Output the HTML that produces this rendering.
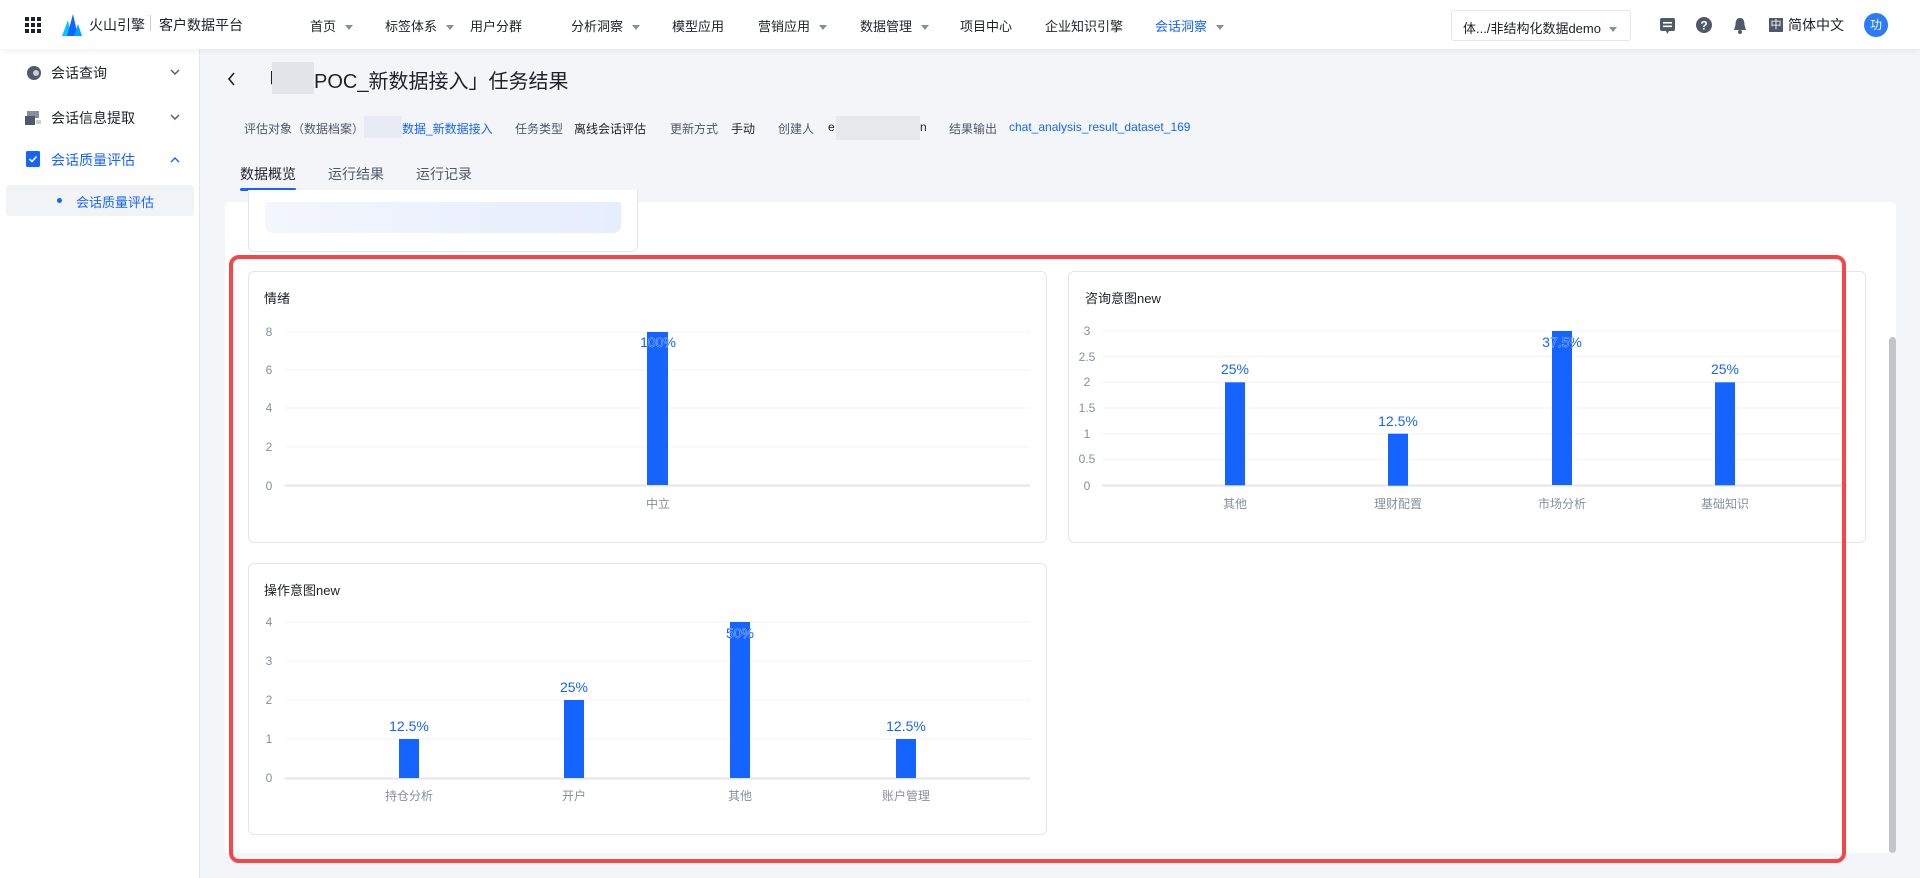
<!DOCTYPE html>
<html><head><meta charset="utf-8"><style>
*{margin:0;padding:0;box-sizing:border-box}
body{width:1920px;height:878px;overflow:hidden;background:#f3f5f9;font-family:"Liberation Sans","Noto Sans CJK SC",sans-serif;color:#1d2129;position:relative}
.a{position:absolute;white-space:nowrap}
.hdr{position:absolute;left:0;top:0;width:1920px;height:49px;background:#fff;box-shadow:0 2px 6px rgba(0,0,0,.06);z-index:2}
.nav{font-size:13px;color:#1d2129;top:16px}
.tri{display:inline-block;width:0;height:0;border-left:4px solid transparent;border-right:4px solid transparent;border-top:5px solid #86909c;margin-left:9px;vertical-align:middle}
.side{position:absolute;left:0;top:49px;width:200px;height:829px;background:#fff;border-right:1px solid #e5e6eb}
.si{font-size:14px;color:#1d2129}
.card{position:absolute;background:#fff;border:1px solid #e5e6eb;border-radius:6px}
.lbl{font-size:12px;color:#4e5969;top:120px}
.val{font-size:12px;color:#1d2129;top:120px}
</style></head><body>
<div class="hdr">
  <svg class="a" style="left:25px;top:17px" width="16" height="16"><g fill="#1d2129"><rect x="0" y="0" width="4" height="4"/><rect x="6" y="0" width="4" height="4"/><rect x="12" y="0" width="4" height="4"/><rect x="0" y="6" width="4" height="4"/><rect x="6" y="6" width="4" height="4"/><rect x="12" y="6" width="4" height="4"/><rect x="0" y="12" width="4" height="4"/><rect x="6" y="12" width="4" height="4"/><rect x="12" y="12" width="4" height="4"/></g></svg>
  <svg class="a" style="left:62px;top:14px" width="20" height="22"><path d="M0 22 L6 6 L9 22Z" fill="#00c8ff"/><path d="M5 22 L11 0 L16 22Z" fill="#1664ff"/><path d="M12 22 L16 10 L20 22Z" fill="#00a3ff"/></svg>
  <div class="a" style="left:89px;top:15px;font-size:14px">火山引擎</div>
  <div class="a" style="left:150px;top:15px;width:1px;height:16px;background:#c9cdd4"></div>
  <div class="a" style="left:159px;top:15px;font-size:14px">客户数据平台</div>
  <div class="a nav" style="left:310px">首页<span class="tri"></span></div>
  <div class="a nav" style="left:385px">标签体系<span class="tri"></span></div>
  <div class="a nav" style="left:470px">用户分群</div>
  <div class="a nav" style="left:571px">分析洞察<span class="tri"></span></div>
  <div class="a nav" style="left:672px">模型应用</div>
  <div class="a nav" style="left:758px">营销应用<span class="tri"></span></div>
  <div class="a nav" style="left:860px">数据管理<span class="tri"></span></div>
  <div class="a nav" style="left:960px">项目中心</div>
  <div class="a nav" style="left:1045px">企业知识引擎</div>
  <div class="a nav" style="left:1155px;color:#1664ff">会话洞察<span class="tri"></span></div>
  <div class="a" style="left:1451px;top:10px;width:180px;height:31px;border:1px solid #e5e6eb;border-radius:3px;font-size:13px;padding:7px 0 0 11px">体.../非结构化数据demo<span class="tri" style="margin-left:8px"></span></div>
  <svg class="a" style="left:1660px;top:18px" width="15" height="16"><rect x="0" y="0" width="15" height="13" rx="2" fill="#4e5969"/><path d="M6 13 L7.5 16 L9 13Z" fill="#4e5969"/><rect x="3" y="4" width="9" height="1.6" fill="#fff"/><rect x="3" y="7.5" width="9" height="1.6" fill="#fff"/></svg>
  <svg class="a" style="left:1696px;top:17px" width="16" height="16"><circle cx="8" cy="8" r="8" fill="#4e5969"/><text x="8" y="12.5" font-size="12" font-weight="bold" fill="#fff" text-anchor="middle" font-family="Liberation Sans">?</text></svg>
  <svg class="a" style="left:1733px;top:17px" width="14" height="17"><path d="M7 1 C3 1 2.5 5 2.5 8 L1 13 L13 13 L11.5 8 C11.5 5 11 1 7 1Z" fill="#4e5969"/><circle cx="7" cy="15" r="2" fill="#4e5969"/></svg>
  <div class="a" style="left:1769px;top:18px;width:14px;height:14px;background:#4e5969;color:#fff;font-size:11px;text-align:center;line-height:14px">中</div>
  <div class="a" style="left:1788px;top:15px;font-size:14px">简体中文</div>
  <div class="a" style="left:1864px;top:13px;width:24px;height:24px;border-radius:50%;background:#2b7cf6;color:#fff;font-size:12px;text-align:center;line-height:24px">功</div>
</div>

<div class="side">
  <svg class="a" style="left:26px;top:16px" width="16" height="16"><circle cx="8" cy="8" r="7" fill="#4e5969"/><circle cx="10" cy="8" r="3" fill="#c9cdd4"/></svg>
  <div class="a si" style="left:51px;top:14px">会话查询</div>
  <svg class="a" style="left:170px;top:20px" width="10" height="7"><path d="M1 1 L5 5 L9 1" stroke="#4e5969" stroke-width="1.4" fill="none"/></svg>
  <svg class="a" style="left:25px;top:60px" width="16" height="16"><rect x="2" y="2" width="12" height="7" fill="#86909c"/><rect x="0" y="7" width="10" height="9" fill="#4e5969"/><rect x="11" y="11" width="5" height="4" fill="#c9cdd4"/></svg>
  <div class="a si" style="left:51px;top:59px">会话信息提取</div>
  <svg class="a" style="left:170px;top:65px" width="10" height="7"><path d="M1 1 L5 5 L9 1" stroke="#4e5969" stroke-width="1.4" fill="none"/></svg>
  <svg class="a" style="left:26px;top:102px" width="14" height="16"><rect x="0" y="0" width="14" height="16" rx="1.5" fill="#1664ff"/><path d="M3.5 8 L6 10.5 L10.5 5.5" stroke="#fff" stroke-width="1.6" fill="none"/></svg>
  <div class="a si" style="left:51px;top:101px;color:#1664ff">会话质量评估</div>
  <svg class="a" style="left:170px;top:107px" width="10" height="7"><path d="M1 6 L5 2 L9 6" stroke="#1664ff" stroke-width="1.4" fill="none"/></svg>
  <div class="a" style="left:6px;top:136px;width:188px;height:31px;background:#f2f3f5;border-radius:3px"></div>
  <div class="a" style="left:57px;top:149px;width:5px;height:5px;border-radius:50%;background:#1664ff"></div>
  <div class="a" style="left:76px;top:143px;font-size:13px;color:#1664ff">会话质量评估</div>
</div>

<svg class="a" style="left:227px;top:72px" width="10" height="14"><path d="M7 1 L2 7 L7 13" stroke="#1d2129" stroke-width="1.6" fill="none"/></svg>
<div class="a" style="left:258px;top:65px;font-size:20px">「</div>
<div class="a" style="left:272px;top:62px;width:42px;height:32px;background:#e3e5ea"></div>
<div class="a" style="left:314px;top:65px;font-size:20px">POC_新数据接入」任务结果</div>

<div class="a lbl" style="left:244px">评估对象（数据档案）</div>
<div class="a" style="left:364px;top:116px;width:38px;height:22px;background:#e6ebf4"></div>
<div class="a" style="left:402px;top:120px;font-size:12px;color:#1664ff">数据_新数据接入</div>
<div class="a lbl" style="left:515px">任务类型</div>
<div class="a val" style="left:574px">离线会话评估</div>
<div class="a lbl" style="left:670px">更新方式</div>
<div class="a val" style="left:731px">手动</div>
<div class="a lbl" style="left:778px">创建人</div>
<div class="a val" style="left:828px">e</div>
<div class="a" style="left:836px;top:116px;width:84px;height:24px;background:#e6e8ec"></div>
<div class="a val" style="left:920px">n</div>
<div class="a lbl" style="left:949px">结果输出</div>
<div class="a" style="left:1009px;top:120px;font-size:12px;color:#1664ff">chat_analysis_result_dataset_169</div>

<div class="a" style="left:240px;top:164px;font-size:14px">数据概览</div>
<div class="a" style="left:240px;top:188px;width:56px;height:3px;background:#1664ff;border-radius:2px"></div>
<div class="a" style="left:328px;top:164px;font-size:14px;color:#4e5969">运行结果</div>
<div class="a" style="left:416px;top:164px;font-size:14px;color:#4e5969">运行记录</div>

<div class="a" style="left:225px;top:202px;width:1671px;height:651px;background:#fff;border-radius:4px"></div>
<div class="card" style="left:248px;top:190px;width:390px;height:62px;border-top:none;border-radius:0 0 6px 6px"></div>
<div class="a" style="left:265px;top:202px;width:356px;height:31px;border-radius:0 0 8px 8px;background:linear-gradient(90deg,#f3f6fd,#e6edfd)"></div>
<div class="a" style="left:1889px;top:337px;width:7px;height:516px;background:#c1c4ca;border-radius:4px"></div>

<div class="card" style="left:248px;top:271px;width:799px;height:272px"></div>
<div class="card" style="left:1068px;top:271px;width:798px;height:272px"></div>
<div class="card" style="left:248px;top:563px;width:799px;height:272px"></div>

<svg class="a" style="left:0;top:0" width="1920" height="878" font-family="Liberation Sans, Noto Sans CJK SC, sans-serif">
<g font-size="13" fill="#1d2129">
<text x="264" y="303">情绪</text>
<text x="1085" y="303">咨询意图new</text>
<text x="264" y="595">操作意图new</text>
</g>
<g stroke="#f2f3f5"><line x1="285" x2="1030" y1="332" y2="332"/><line x1="285" x2="1030" y1="370" y2="370"/><line x1="285" x2="1030" y1="408" y2="408"/><line x1="285" x2="1030" y1="447" y2="447"/></g>
<line x1="285" x2="1030" y1="485.5" y2="485.5" stroke="#e5e6eb" stroke-width="2"/>
<g font-size="12" fill="#86909c" text-anchor="middle"><text x="269" y="336">8</text><text x="269" y="374">6</text><text x="269" y="412">4</text><text x="269" y="451">2</text><text x="269" y="490">0</text><text x="658" y="508">中立</text></g>
<rect x="647" y="332" width="21" height="153" fill="#1664ff"/>
<g font-size="14" fill="#1664ff" text-anchor="middle" stroke="#fff" stroke-width="0.5" paint-order="stroke"><text x="658" y="347">100%</text></g>
<g stroke="#f2f3f5"><line x1="1102" x2="1847" y1="331" y2="331"/><line x1="1102" x2="1847" y1="356.7" y2="356.7"/><line x1="1102" x2="1847" y1="382.3" y2="382.3"/><line x1="1102" x2="1847" y1="408" y2="408"/><line x1="1102" x2="1847" y1="433.7" y2="433.7"/><line x1="1102" x2="1847" y1="459.3" y2="459.3"/></g>
<line x1="1102" x2="1847" y1="485.5" y2="485.5" stroke="#e5e6eb" stroke-width="2"/>
<g font-size="12" fill="#86909c" text-anchor="middle"><text x="1087" y="335">3</text><text x="1087" y="361">2.5</text><text x="1087" y="386">2</text><text x="1087" y="412">1.5</text><text x="1087" y="438">1</text><text x="1087" y="463">0.5</text><text x="1087" y="490">0</text>
<text x="1235" y="508">其他</text><text x="1398" y="508">理财配置</text><text x="1562" y="508">市场分析</text><text x="1725" y="508">基础知识</text></g>
<g fill="#1664ff"><rect x="1225" y="382.3" width="20" height="103"/><rect x="1388" y="433.7" width="20" height="52"/><rect x="1552" y="331" width="20" height="154"/><rect x="1715" y="382.3" width="20" height="103"/></g>
<g font-size="14" fill="#1664ff" text-anchor="middle"><text x="1235" y="374">25%</text><text x="1398" y="426">12.5%</text><text x="1562" y="347" stroke="#fff" stroke-width="0.5" paint-order="stroke">37.5%</text><text x="1725" y="374">25%</text></g>
<g stroke="#f2f3f5"><line x1="285" x2="1030" y1="622" y2="622"/><line x1="285" x2="1030" y1="661" y2="661"/><line x1="285" x2="1030" y1="700" y2="700"/><line x1="285" x2="1030" y1="739" y2="739"/></g>
<line x1="285" x2="1030" y1="778.5" y2="778.5" stroke="#e5e6eb" stroke-width="2"/>
<g font-size="12" fill="#86909c" text-anchor="middle"><text x="269" y="626">4</text><text x="269" y="665">3</text><text x="269" y="704">2</text><text x="269" y="743">1</text><text x="269" y="782">0</text>
<text x="409" y="800">持仓分析</text><text x="574" y="800">开户</text><text x="740" y="800">其他</text><text x="906" y="800">账户管理</text></g>
<g fill="#1664ff"><rect x="399" y="739" width="20" height="39"/><rect x="564" y="700" width="20" height="78"/><rect x="730" y="622" width="20" height="156"/><rect x="896" y="739" width="20" height="39"/></g>
<g font-size="14" fill="#1664ff" text-anchor="middle"><text x="409" y="731">12.5%</text><text x="574" y="692">25%</text><text x="740" y="638" stroke="#fff" stroke-width="0.5" paint-order="stroke">50%</text><text x="906" y="731">12.5%</text></g>
<rect x="231" y="257" width="1613" height="604" rx="8" fill="none" stroke="#f5474a" stroke-width="4"/>
</svg>
</body></html>
